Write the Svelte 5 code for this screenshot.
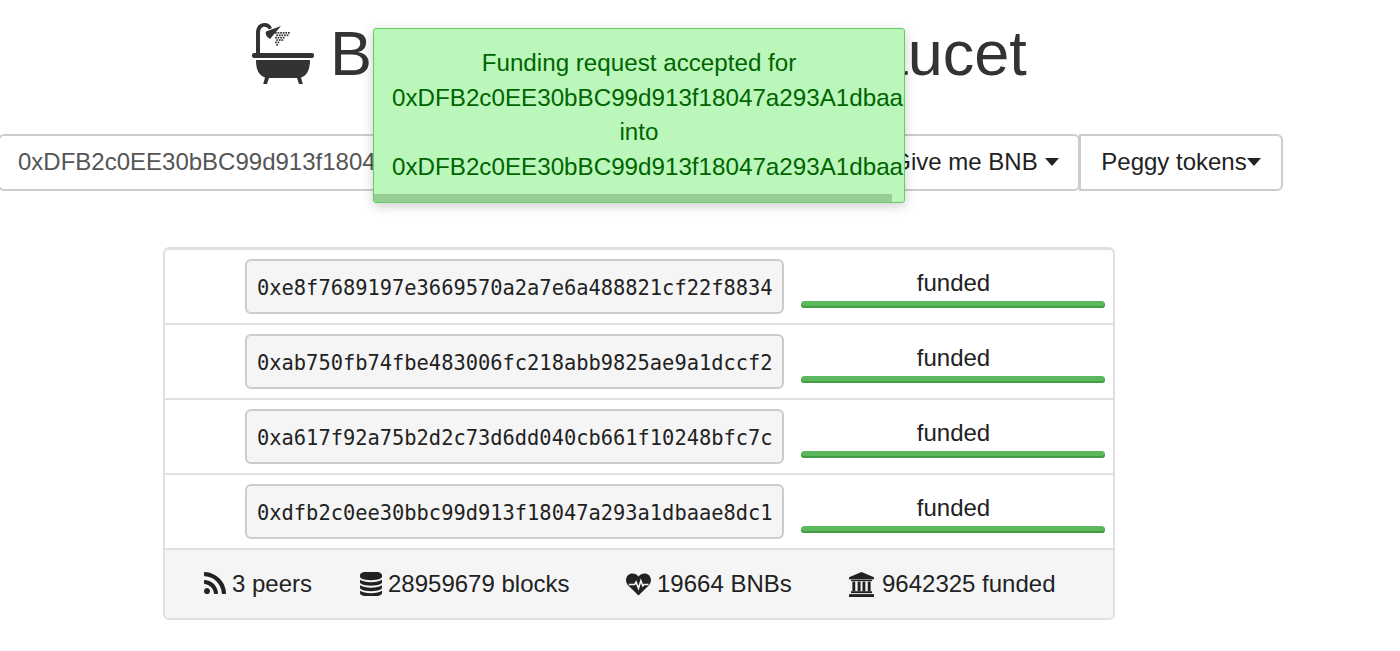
<script>
  const address = "0xDFB2c0EE30bBC99d913f18047a293A1dbaae8dC1";
  const rows = [
    "0xe8f7689197e3669570a2a7e6a488821cf22f8834",
    "0xab750fb74fbe483006fc218abb9825ae9a1dccf2",
    "0xa617f92a75b2d2c73d6dd040cb661f10248bfc7c",
    "0xdfb2c0ee30bbc99d913f18047a293a1dbaae8dc1",
  ];

  // shower spray, a checker of small dots fanning out from the head
  const drops = [];
  for (let r = 0; r < 6; r++) {
    for (let c = 0; c < 6 - r; c++) {
      drops.push({ x: 23 + c * 2.6 + (r % 2) * 1.3, y: 9 + r * 2.4 });
    }
  }
</script>

<div class="page">
  <h1 class="title">
    <svg class="bath" viewBox="0 0 62 62" aria-hidden="true">
      <path d="M4 30V10C4 3.500 7.500 0 12.500 0c3.500 0 6 1.800 7.500 5l-3.200 1.500C15.800 4.500 14.500 3.700 12.500 3.700 9.500 3.700 8 6 8 10V30z" />
      <path d="M14 8.500 29 3 18 16c-3-1.500-5-4.500-4-7.500z" />
      <rect x="0" y="30" width="62" height="5" rx="2" />
      <path d="M4 37h54c0 3-.3 9-3 13-1.500 2.200-3.500 3.700-6 4.500l1.800 6.500h-3.800l-2-6H17l-2 6h-3.800l1.800-6.500c-2.500-.8-4.500-2.300-6-4.500-2.700-4-3-10-3-13z" />
      {#each drops as d}
        <rect x={d.x} y={d.y} width="1.700" height="1.700" />
      {/each}
    </svg>
    <span>Binance Testnets Faucet</span>
  </h1>

  <div class="input-group">
    <input class="address" type="text" value={address} />
    <button class="btn first">Give me BNB <i class="caret"></i></button>
    <button class="btn">Peggy tokens<i class="caret"></i></button>
  </div>

  <div class="panel">
    {#each rows as hash}
      <div class="row">
        <pre class="hash">{hash}</pre>
        <div class="status">
          <span>funded</span>
          <div class="bar"></div>
        </div>
      </div>
    {/each}
    <div class="footer">
      <div class="stat">
        <svg viewBox="192 192 1408 1408"><path d="M576 1344q0 80-56 136t-136 56-136-56-56-136 56-136 136-56 136 56 56 136zm512 123q2 28-17 48-18 21-47 21h-135q-25 0-43-16.500t-20-41.500q-22-229-184.500-391.500t-391.500-184.500q-25-2-41.500-20t-16.500-43v-135q0-29 21-47 17-17 43-17h5q160 13 306 80.500t259 181.500q114 113 181.500 259t80.500 306zm512 2q2 27-18 47-18 20-46 20h-143q-26 0-44.500-17.500t-19.500-42.500q-12-215-101-408.500t-231.500-336-336-231.500-408.500-102q-25-1-42.500-19.500t-17.500-43.500v-143q0-28 20-46 18-18 44-18h3q262 13 501.500 120t425.500 294q187 186 294 425.500t120 501.500z" /></svg>
        3 peers
      </div>
      <div class="stat">
        <svg viewBox="128 128 1536 1536"><path d="M896 768q237 0 443-43t325-127v170q0 69-103 128t-280 93.500-385 34.500-385-34.500-280-93.500-103-128v-170q119 84 325 127t443 43zm0 768q237 0 443-43t325-127v170q0 69-103 128t-280 93.500-385 34.500-385-34.500-280-93.500-103-128v-170q119 84 325 127t443 43zm0-384q237 0 443-43t325-127v170q0 69-103 128t-280 93.500-385 34.500-385-34.500-280-93.500-103-128v-170q119 84 325 127t443 43zm0-1152q208 0 385 34.500t280 93.500 103 128v128q0 69-103 128t-280 93.500-385 34.500-385-34.500-280-93.500-103-128v-128q0-69 103-128t280-93.500 385-34.500z" /></svg>
        28959679 blocks
      </div>
      <div class="stat stat-bnbs">
        <svg viewBox="0 0 26 24"><path d="M13 23.500 2.600 13.200C.9 11.500 0 9.600 0 7.500 0 3.200 3 .5 6.800.5c2.500 0 4.700 1.200 6.200 3.200C14.500 1.700 16.700.5 19.200.5 23 .5 26 3.200 26 7.500c0 2.100-.9 4-2.600 5.700z" /><path class="pulse" d="M3 12h6l1.500-2.500 2.500 6.500 2.500-8 2 5.500 1-1.500h5" /></svg>
        19664 BNBs
      </div>
      <div class="stat stat-funded">
        <svg viewBox="0 0 26 26"><path d="M13 0 26 5.500V7.500H0V5.500z" /><rect x="2" y="8" width="22" height="1.500" /><rect x="3.500" y="10" width="3" height="10" /><rect x="9" y="10" width="3" height="10" /><rect x="14" y="10" width="3" height="10" /><rect x="19.500" y="10" width="3" height="10" /><rect x="2" y="20" width="22" height="2" /><rect x="0" y="23" width="26" height="3" /></svg>
        9642325 funded
      </div>
    </div>
  </div>

  <div class="toast">
    <div class="toast-line">Funding request accepted for</div>
    <div class="toast-line">{address}</div>
    <div class="toast-line">into</div>
    <div class="toast-line">{address}</div>
    <div class="toast-progress"></div>
  </div>
</div>

<style>
  :global(body) {
    background: #fff;
    overflow: hidden;
  }

  .page {
    position: relative;
    height: 651px;
    width: 1400px;
    overflow: hidden;
    font-family: "Liberation Sans", Arial, sans-serif;
    color: #222;
  }

  .title {
    display: flex;
    justify-content: center;
    align-items: center;
    gap: 16px;
    margin: 0;
    padding: 18px 121px 0 0;
    height: 70px;
    font-size: 63px;
    font-weight: 400;
    word-spacing: 4px;
    color: #333;
    white-space: nowrap;
  }

  .bath {
    width: 62px;
    height: 62px;
    margin-top: 1px;
    fill: #333;
    flex: none;
  }

  .input-group {
    display: flex;
    height: 57px;
    width: 1285px;
    margin: 46px 0 0 -2px;
    font-size: 24px;
  }

  .address {
    flex: 1;
    min-width: 0;
    padding: 0 18px 2px;
    border: 2px solid #ccc;
    border-right: none;
    border-radius: 6px 0 0 6px;
    font: inherit;
    color: #555;
    outline: none;
  }

  .btn {
    display: flex;
    align-items: center;
    justify-content: center;
    gap: 7px;
    background: #fff;
    border: 2px solid #ccc;
    border-radius: 0 6px 6px 0;
    font: inherit;
    color: #222;
    padding: 0 0 2px;
    width: 204px;
  }

  .first {
    width: 206px;
    margin-right: -1px;
    padding-right: 3px;
  }

  .btn:last-child .caret {
    margin-left: -7px;
  }

  .caret {
    width: 0;
    height: 0;
    border-left: 7.500px solid transparent;
    border-right: 7.500px solid transparent;
    border-top: 8px solid #222;
  }

  .panel {
    width: 952px;
    margin: 56px 0 0 163px;
    border: 2px solid #e0e0e0;
    border-top-width: 3px;
    border-radius: 6px;
    box-sizing: border-box;
    height: 373px;
    overflow: hidden;
  }

  .row {
    display: flex;
    align-items: flex-start;
    height: 75px;
    box-sizing: border-box;
    padding: 9px 8px 0 80px;
    gap: 17px;
    border-bottom: 2px solid #e0e0e0;
  }

  .hash {
    width: 539px;
    height: 55px;
    flex: none;
    box-sizing: border-box;
    margin: 0;
    padding: 0 10px;
    background: #f5f5f5;
    border: 2px solid #ccc;
    border-radius: 6px;
    font-family: "DejaVu Sans Mono", monospace;
    font-size: 20.400px;
    line-height: 54px;
    color: #222;
    overflow: hidden;
  }

  .status {
    flex: 1;
    text-align: center;
    font-size: 24px;
    padding-top: 8px;
  }

  .status span {
    display: block;
    line-height: 32px;
    padding-left: 1px;
  }

  .bar {
    height: 7px;
    margin-top: 2px;
    border-radius: 4px;
    background: #5cb85c;
    box-shadow: inset 0 -2px 0 #449d44;
  }

  .footer {
    display: grid;
    grid-template-columns: 156px 266px 222px auto;
    align-items: center;
    height: 68px;
    padding-left: 39px;
    background: #f5f5f5;
    font-size: 24px;
  }

  .stat {
    display: flex;
    align-items: center;
    gap: 6px;
    white-space: nowrap;
  }

  .stat svg {
    width: 22px;
    height: 24px;
    fill: #222;
    flex: none;
  }

  .stat-bnbs svg {
    width: 25px;
    height: 23px;
  }

  .stat-funded {
    gap: 7px;
  }

  .stat-funded svg {
    width: 27px;
    height: 25px;
  }

  .pulse {
    fill: none;
    stroke: #f5f5f5;
    stroke-width: 1.600;
  }

  .toast {
    position: absolute;
    top: 28px;
    left: 373px;
    width: 532px;
    height: 175px;
    box-sizing: border-box;
    padding: 17px 0 0;
    background: #bbf7bb;
    border: 1px solid #5fcf5f;
    border-radius: 3px;
    box-shadow: 0 3px 12px rgba(0, 0, 0, 0.2);
    color: #006400;
    font-size: 24.200px;
    overflow: hidden;
  }

  .toast-line {
    line-height: 34.500px;
    white-space: nowrap;
    padding-left: 18px;
  }

  .toast-line:nth-child(1),
  .toast-line:nth-child(3) {
    text-align: center;
    padding: 0;
  }

  .toast-progress {
    position: absolute;
    left: 0;
    bottom: 0;
    width: 518px;
    height: 8px;
    background: #98cd98;
  }
</style>
